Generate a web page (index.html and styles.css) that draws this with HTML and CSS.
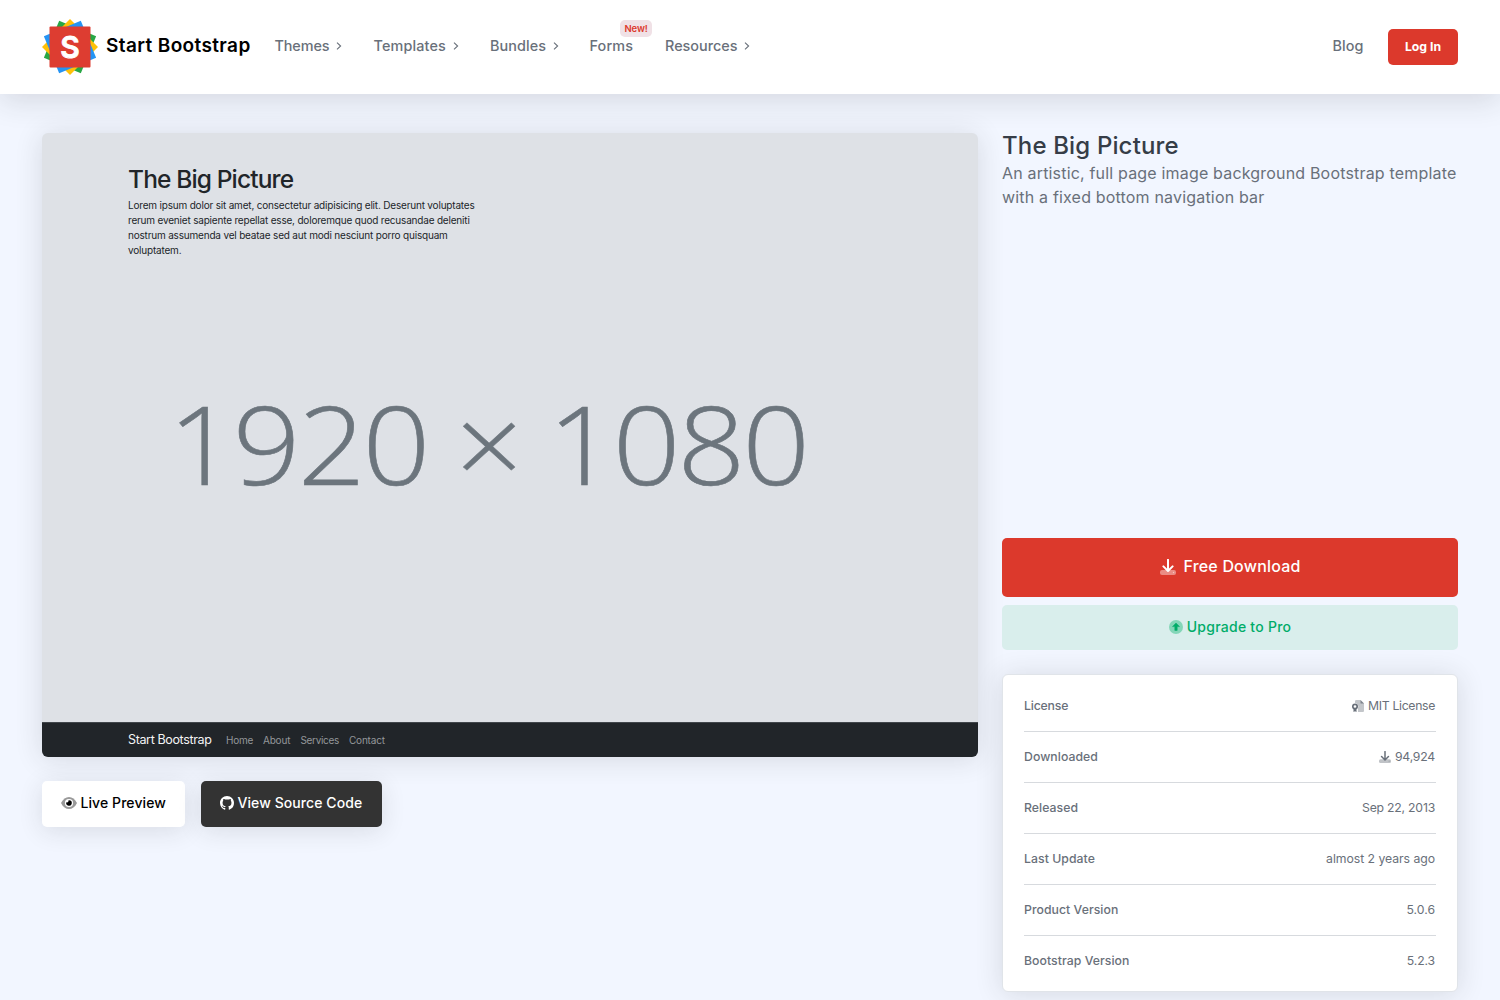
FILE: index.html
```
<!DOCTYPE html>
<html lang="en">
<head>
<meta charset="utf-8">
<title>The Big Picture - Start Bootstrap</title>
<link rel="stylesheet" href="styles.css">
</head>
<body>
<svg class="sprite" aria-hidden="true">
  <symbol id="chevron" viewBox="0 0 6 8"><path d="M1 .7 4.6 4 1 7.3" fill="none" stroke="currentColor" stroke-width="1.1"/></symbol>
  <symbol id="download" viewBox="0 0 16 16"><rect y="11" width="16" height="5" rx="2" fill="currentColor" opacity=".42"/><path d="M8 .8v11M3.4 7.4 8 12l4.6-4.6" fill="none" stroke="currentColor" stroke-width="2" stroke-linejoin="round" stroke-linecap="round"/><circle cx="13.5" cy="13.5" r=".7" fill="currentColor" opacity=".5"/></symbol>
</svg>
<header class="topbar">
  <a class="brand">
    <svg class="logo" viewBox="0 0 56 56">
      <rect x="8" y="8" width="40" height="40" fill="#28a745" transform="rotate(22.5 28 28)"/>
      <rect x="8.2" y="8.2" width="39.6" height="39.6" fill="#ffc107" transform="rotate(45 28 28)"/>
      <rect x="8" y="8" width="40" height="40" fill="#2494f4" transform="rotate(67.5 28 28)"/>
      <rect x="7.5" y="7.5" width="41" height="41" rx="1" fill="#dd3d31"/>
      <text x="28" y="38.8" text-anchor="middle" class="logo-letter">S</text>
    </svg>
    <span class="brand-name">Start Bootstrap</span>
  </a>
  <nav class="menu">
    <a><span class="w-themes">Themes</span><svg class="chev"><use href="#chevron"/></svg></a>
    <a><span class="w-templates">Templates</span><svg class="chev"><use href="#chevron"/></svg></a>
    <a><span class="w-bundles">Bundles</span><svg class="chev"><use href="#chevron"/></svg></a>
    <a class="forms"><span class="w-forms">Forms</span><span class="badge">New!</span></a>
    <a><span class="w-resources">Resources</span><svg class="chev"><use href="#chevron"/></svg></a>
  </nav>
  <a class="blog">Blog</a>
  <a class="login">Log In</a>
</header>
<main class="content">
  <section class="left">
    <div class="preview">
      <div class="preview-body">
        <h2>The Big Picture</h2>
        <p>Lorem ipsum dolor sit amet, consectetur adipisicing elit. Deserunt voluptates<br>rerum eveniet sapiente repellat esse, doloremque quod recusandae deleniti<br>nostrum assumenda vel beatae sed aut modi nesciunt porro quisquam<br>voluptatem.</p>
        <div class="dimensions">1920 × 1080</div>
      </div>
      <div class="preview-nav"><b>Start Bootstrap</b><span class="n1">Home</span><span class="n2">About</span><span class="n3">Services</span><span class="n4">Contact</span></div>
    </div>
    <div class="actions">
      <a class="btn btn-light">
        <svg width="16" height="14" viewBox="0 0 16 14"><path d="M0 7C2 3 4.8 1 8 1s6 2 8 6c-2 4-4.800 6-8 6S2 11 0 7Z" fill="#999"/><circle cx="8" cy="7" r="4.100" fill="#fff"/><path d="M8 4.200a2.800 2.800 0 1 1-2.700 2.100c1.300.5 2.600-.5 2.200-2Z" fill="#000"/></svg>
        <span>Live Preview</span></a>
      <a class="btn btn-dark">
        <svg width="14" height="14" viewBox="0 0 16 16"><path fill="#fff" d="M8 0C3.580 0 0 3.580 0 8c0 3.540 2.290 6.530 5.470 7.590.4.070.55-.17.55-.38 0-.19-.01-.82-.01-1.490-2.010.37-2.530-.49-2.690-.94-.09-.23-.48-.94-.82-1.130-.28-.15-.68-.52-.01-.53.63-.01 1.080.58 1.230.82.72 1.210 1.870.87 2.330.66.070-.52.28-.87.51-1.070-1.780-.2-3.640-.89-3.640-3.950 0-.87.31-1.590.82-2.150-.08-.2-.36-1.020.08-2.120 0 0 .67-.21 2.200.82.64-.18 1.320-.27 2-.27s1.360.09 2 .27c1.530-1.040 2.200-.82 2.200-.82.44 1.100.16 1.920.08 2.120.51.56.82 1.270.82 2.150 0 3.070-1.870 3.750-3.650 3.950.29.25.54.73.54 1.480 0 1.070-.01 1.930-.01 2.200 0 .21.15.46.55.38A8.010 8.010 0 0 0 16 8c0-4.420-3.580-8-8-8Z"/></svg>
        <span>View Source Code</span></a>
    </div>
  </section>
  <aside class="right">
    <h1>The Big Picture</h1>
    <p class="lead">An artistic, full page image background Bootstrap template<br>with a fixed bottom navigation bar</p>
    <a class="download"><svg width="16" height="16"><use href="#download"/></svg><span>Free Download</span></a>
    <a class="upgrade"><svg width="14" height="14" viewBox="0 0 14 14"><circle cx="7" cy="7" r="7" fill="#84d6b8"/><path d="M7 3 10.500 6.600H8.200v3.800H5.800V6.600H3.500Z" fill="#00ac69" stroke="#00ac69" stroke-width=".5" stroke-linejoin="round"/></svg><span>Upgrade to Pro</span></a>
    <dl class="details">
      <div><dt class="d1">License</dt><dd><svg width="12" height="12" viewBox="0 0 12 12"><path d="M3 1.200Q3 0 4.200 0H8.500L12 3.500V11q0 1-1 1H6V8A3.500 3.500 0 0 0 3 3Z" fill="currentColor" opacity=".4"/><path d="M8.500 0 12 3.500H8.500Z" fill="currentColor" opacity=".75"/><circle cx="3" cy="6.500" r="2.200" fill="none" stroke="currentColor" stroke-width="1.700"/><path d="M1.500 8.600v3.400L3 11.200l1.500.8V8.600Z" fill="currentColor"/></svg><span class="v1">MIT License</span></dd></div>
      <div><dt>Downloaded</dt><dd><svg width="12" height="12"><use href="#download"/></svg><span class="v2">94,924</span></dd></div>
      <div><dt>Released</dt><dd class="v3">Sep 22, 2013</dd></div>
      <div><dt>Last Update</dt><dd class="v4">almost 2 years ago</dd></div>
      <div><dt>Product Version</dt><dd class="v5">5.0.6</dd></div>
      <div><dt>Bootstrap Version</dt><dd class="v6">5.2.3</dd></div>
    </dl>
  </aside>
</main>
</body>
</html>
```
FILE: styles.css
```
* { box-sizing: border-box; }
body { margin: 0; height: 1000px; overflow: hidden; background: #f2f6ff; color: #69707a; font-family: Inter, sans-serif; }
h1, h2, p, dl, dd { margin: 0; }
.sprite { display: none; }
svg { display: block; flex: none; }

.topbar { position: relative; display: flex; align-items: center; height: 93.500px; padding: 0 42px; background: #fff; box-shadow: 0 7px 28px rgba(40, 44, 40, .14); }
.brand { display: flex; align-items: center; width: 232.500px; gap: 8px; }
.logo { width: 56px; height: 56px; }
.logo-letter { font: 600 30px Inter, sans-serif; fill: #fff; stroke: #fff; stroke-width: .8px; }
.brand-name { margin-top: -2px; color: #000; font-size: 19px; font-weight: 600; letter-spacing: .38px; white-space: nowrap; }
.menu { display: grid; grid-template-columns: 99px 116.500px 99.500px 75.500px 90px; flex: 1; margin-top: -2.500px; font-size: 14.400px; font-weight: 500; }
.menu a { display: flex; align-items: center; gap: 6.500px; }
.chev { width: 6px; height: 8px; }
.w-themes { letter-spacing: -.1px; }
.w-templates { letter-spacing: .15px; }
.w-bundles { letter-spacing: .08px; }
.w-forms { letter-spacing: .12px; }
.menu .forms { position: relative; }
.badge { position: absolute; left: 30.500px; top: -17px; height: 17px; padding: 0 4.500px; border-radius: 5px; background: #f0e1e6; color: #dd3a2d; font-size: 9.500px; font-weight: 600; line-height: 17.500px; letter-spacing: -.15px; }
.blog { margin: -2.500px 24.500px 0 0; font-size: 14.400px; font-weight: 500; letter-spacing: .08px; }
.login { width: 70px; height: 35.500px; border-radius: 5px; background: #dc392c; color: #fff; font-size: 12.250px; font-weight: 700; line-height: 35.500px; text-align: center; }

.content { display: grid; grid-template-columns: 936px 456px; column-gap: 24px; padding: 39.500px 42px 0; }
.preview { height: 624px; overflow: hidden; border-radius: 6px; background: #dee1e6; color: #212529; box-shadow: 0 2px 28px rgba(40, 44, 40, .14); }
.preview-body { height: 589px; padding: 31px 0 0 86px; }
.preview h2 { font-size: 24.500px; font-weight: 500; line-height: 30px; letter-spacing: -.86px; }
.preview p { margin-top: 4px; font-size: 10px; line-height: 15px; letter-spacing: -.19px; }
.dimensions { margin: 108px 0 0 40px; color: #6c757d; font: 300 109px/154px "Open Sans", sans-serif; letter-spacing: -2.750px; -webkit-text-stroke: .6px #6c757d; white-space: nowrap; transform: scaleX(1.09); transform-origin: left; }
.preview-nav { display: flex; align-items: center; height: 35px; padding: 0 0 1px 86px; border-top: 1px solid #41464b; background: #212529; color: #94979a; font-size: 10px; }
.preview-nav b { width: 98px; color: #f4f4f5; font-size: 12.500px; font-weight: 400; letter-spacing: -.36px; }
.preview-nav span { letter-spacing: -.2px; }
.n1 { width: 37px; }
.n2 { width: 37.500px; }
.preview-nav .n3 { width: 48.500px; letter-spacing: -.32px; }
.actions { display: flex; gap: 16px; margin-top: 24px; }
.btn { display: flex; align-items: center; height: 45.500px; padding: 0 0 2px 19px; border-radius: 5px; font-size: 14px; font-weight: 500; letter-spacing: .08px; box-shadow: 0 4px 24px rgba(40, 44, 40, .12); }
.btn svg { margin-top: 1px; }
.btn-light { gap: 3.500px; width: 143px; background: #fff; color: #000; }
.btn-dark { gap: 3.500px; width: 180.500px; background: #333; color: #fff; }

.right h1 { margin-top: -1px; color: #363d47; font-size: 24px; font-weight: 500; line-height: 28px; letter-spacing: .15px; }
.lead { height: 377.500px; padding-top: 1px; font-size: 16px; line-height: 24px; letter-spacing: .18px; white-space: nowrap; }
.download, .upgrade { display: flex; align-items: center; justify-content: center; border-radius: 5px; font-weight: 500; }
.download { gap: 8px; height: 59.500px; padding-bottom: 2px; background: #dc392c; color: #fff; font-size: 16px; font-weight: 550; letter-spacing: .18px; }
.download svg { margin-top: 2px; }
.upgrade { gap: 4px; height: 45px; margin-top: 8px; padding-bottom: 2px; background: #d9eeec; color: #00ac69; font-size: 14px; letter-spacing: .25px; }
.upgrade svg { margin-top: 1px; }
.details { height: 318px; margin-top: 24px; padding: 5.500px 21px; border: 1px solid #e0e4e9; border-radius: 6px; background: #fff; box-shadow: 0 2px 28px rgba(40, 44, 40, .14); font-size: 12.250px; }
.details div { display: flex; align-items: center; justify-content: space-between; height: 51px; padding: 0 1px 1px 0; background: linear-gradient(#d7dade, #d7dade) bottom / 100% 1px no-repeat; }
.details div:last-child { background: none; }
dt { font-weight: 500; letter-spacing: .05px; }
.d1 { letter-spacing: -.18px; }
dd { display: flex; align-items: center; gap: 4px; }
.v1 { letter-spacing: -.33px; }
.v2, .v3 { letter-spacing: -.22px; }
.v4 { letter-spacing: -.05px; }
.v6 { letter-spacing: -.15px; }
```
